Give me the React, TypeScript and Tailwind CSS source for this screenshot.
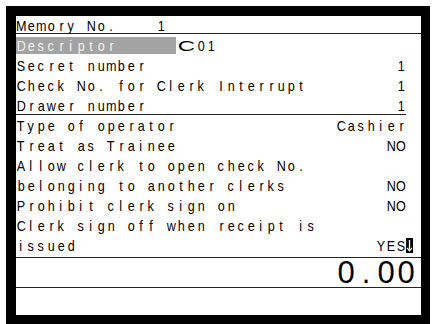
import React from "react";

const COLS = 39;

function pad(left: string, right = "", cols = COLS): string {
  const spaces = Math.max(1, cols - left.length - right.length);
  return right ? left + " ".repeat(spaces) + right : left;
}

function Cells({ text, light = false }: { text: string; light?: boolean }) {
  return (
    <>
      {text.split("").map((ch, i) => (
        <span
          key={i}
          className={`flex w-[10px] shrink-0 justify-center ${light ? "text-[#f4f4f4]" : "text-black"}`}
        >
          <span className="inline-block scale-x-[0.84]">{ch === " " ? "\u00a0" : ch}</span>
        </span>
      ))}
    </>
  );
}

function Row({ text, children }: { text: string; children?: React.ReactNode }) {
  return (
    <div className="flex h-[20px] shrink-0 whitespace-nowrap leading-[20px]">
      <Cells text={text} />
      {children}
    </div>
  );
}

function Cursor() {
  return (
    <span className="flex w-[10px] shrink-0 items-start">
      <span className="mt-[2px] flex h-[15px] w-[7px] items-center justify-center bg-black">
        <svg width="7" height="15" viewBox="0 0 7 15">
          <line x1="3.5" y1="2" x2="3.5" y2="12.5" stroke="white" strokeWidth="1.3" />
          <polyline points="1,9.8 3.5,12.8 6,9.8" fill="none" stroke="white" strokeWidth="1.2" />
        </svg>
      </span>
    </span>
  );
}

export default function App() {
  return (
    <div className="h-[324px] w-[434px] overflow-hidden bg-white pl-[6px] pt-[6px] font-['Liberation_Sans',Arial,sans-serif] text-[15px] text-black">
      <div className="h-[318px] w-[424px] bg-black pl-[10px] pt-[10px]">
        <div className="flex h-[299px] w-[405px] flex-col bg-white">
          {/* Memory No. */}
          <div className="flex h-[17px] shrink-0 whitespace-nowrap leading-[20px]">
            <Cells text={"Memory No.    1"} />
          </div>
          <div className="h-px w-full shrink-0 bg-[#222]" />
          {/* Descriptor */}
          <div className="flex h-[22px] shrink-0 items-start pt-[3px] whitespace-nowrap leading-[18px]">
            <div className="flex h-[17px] bg-[#a3a3a3]">
              <Cells text={"Descriptor      "} light />
            </div>
            <div className="flex h-[17px]">
              <span className="flex w-[20px] shrink-0 justify-center">
                <span className="inline-block scale-x-[1.6]">C</span>
              </span>
              <Cells text="01" />
            </div>
          </div>
          <Row text={pad("Secret number", "1")} />
          <Row text={pad("Check No. for Clerk Interrupt", "1")} />
          <div className="flex h-[18px] shrink-0 whitespace-nowrap leading-[20px]">
            <Cells text={pad("Drawer number", "1")} />
          </div>
          <div className="h-px w-[390px] shrink-0 bg-[#222]" />
          <div className="h-px shrink-0" />
          <Row text={pad("Type of operator", "Cashier")} />
          <Row text={pad("Treat as Trainee", "NO")} />
          <Row text={"Allow clerk to open check No."} />
          <Row text={pad("belonging to another clerks", "NO")} />
          <Row text={pad("Prohibit clerk sign on", "NO")} />
          <Row text={"Clerk sign off when receipt is"} />
          <Row text={pad("issued", "YES")}>
            <Cursor />
          </Row>
          <div className="h-px shrink-0" />
          <div className="h-px w-full shrink-0 bg-[#222]" />
          <div className="flex h-[29px] shrink-0 justify-end pr-[5px] text-[31px] leading-[30px]">
            {"0.00".split("").map((ch, i) => (
              <span key={i} className="flex w-[20px] shrink-0 justify-center">
                {ch}
              </span>
            ))}
          </div>
          <div className="h-px w-full shrink-0 bg-[#222]" />
          <div className="flex-1" />
        </div>
      </div>
    </div>
  );
}
